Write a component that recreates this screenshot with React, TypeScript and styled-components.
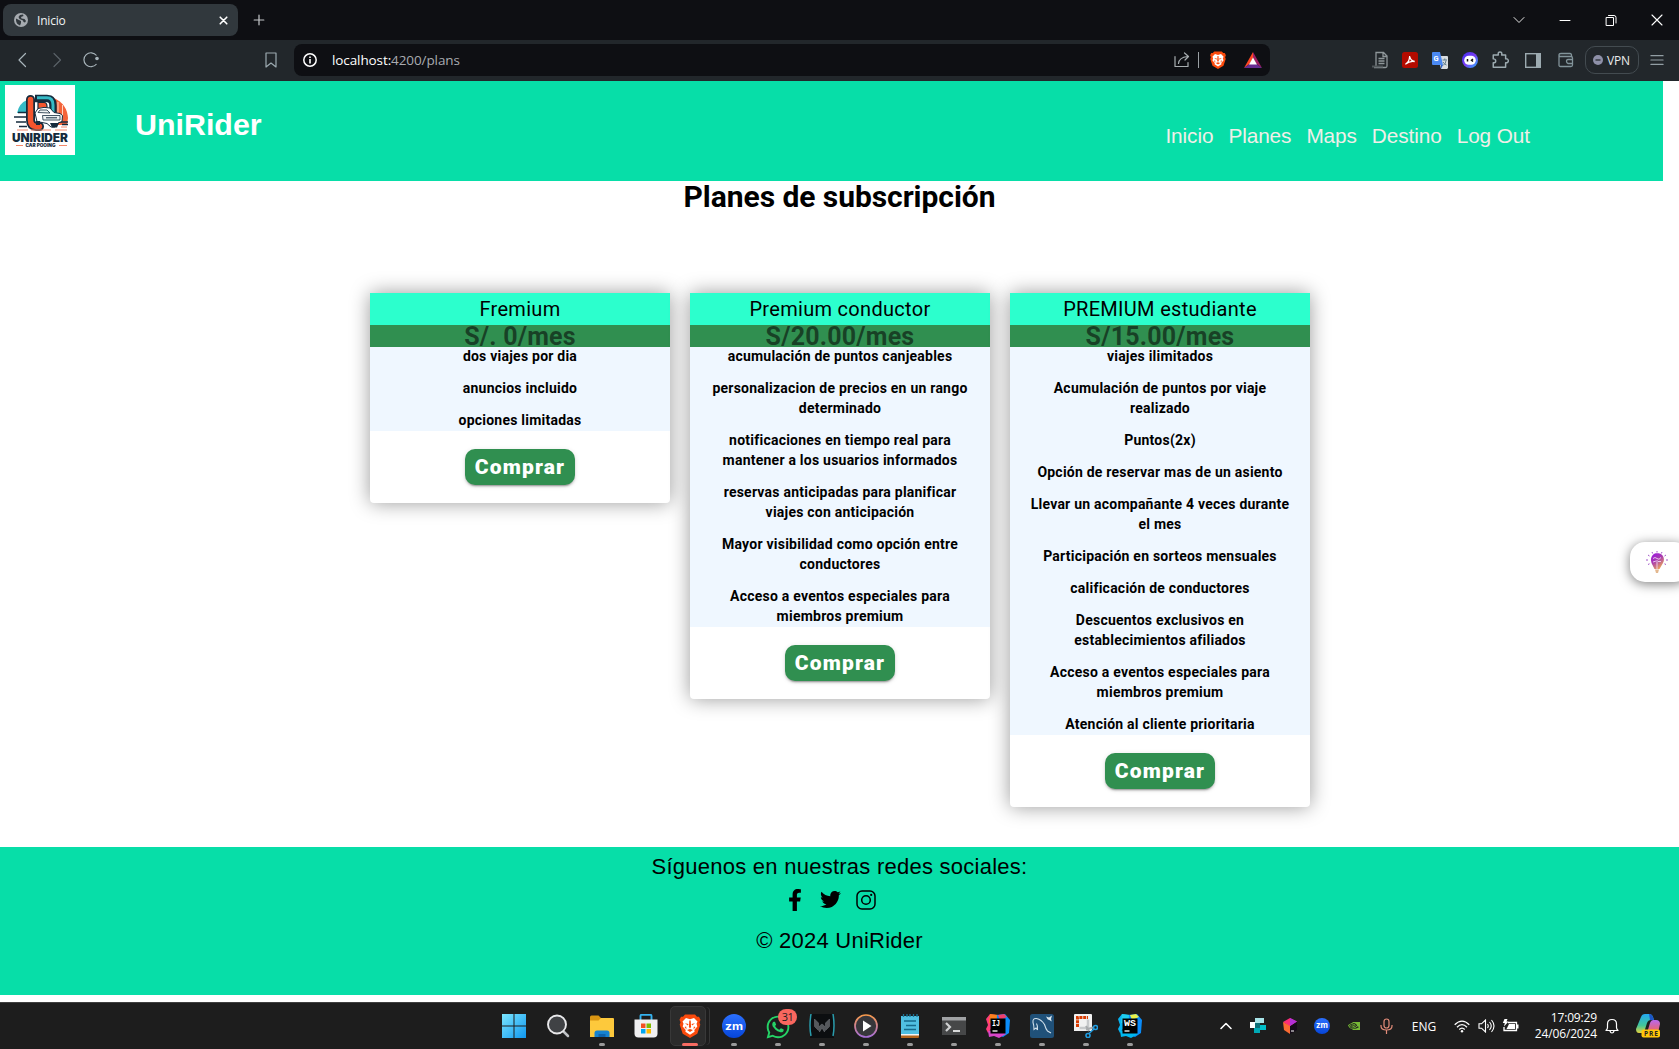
import React from "react";
import styled, { createGlobalStyle } from "styled-components";
import { FaFacebookF, FaTwitter, FaWhatsapp } from "react-icons/fa";
import { SiNvidia } from "react-icons/si";

const GlobalStyle = createGlobalStyle`
  * { box-sizing: border-box; }
  html, body { margin: 0; padding: 0; background: #fff; overflow: hidden; }
  p, h1, h2, ul { margin: 0; padding: 0; }
  svg { display: block; flex: none; }
`;

const ui = `"Open Sans", "Noto Sans", sans-serif`;
const arial = `"Liberation Sans", Arial, sans-serif`;

const Screen = styled.div`
  width: 1679px;
  height: 1049px;
  display: flex;
  flex-direction: column;
  overflow: hidden;
`;

/* Browser chrome */
const TabStrip = styled.div`
  height: 40px;
  background: #0e0f13;
  display: flex;
  align-items: center;
  padding-left: 3px;
`;
const Tab = styled.div`
  width: 235px;
  height: 32px;
  border-radius: 8px;
  background: #31383d;
  display: flex;
  align-items: center;
  padding: 0 7px 0 11px;
  color: #f2f3f4;
  font: 12px ${ui};
  letter-spacing: -0.2px;
`;
const TabTitle = styled.span`
  flex: 1;
  padding-left: 9px;
`;
const Slot = styled.div<{ w: number }>`
  width: ${(p) => p.w}px;
  height: 100%;
  display: flex;
  align-items: center;
  justify-content: center;
  flex: none;
`;
const Spacer = styled.div`
  flex: 1;
`;
const Toolbar = styled.div`
  height: 41px;
  background: #22272b;
  display: flex;
  align-items: center;
  padding: 0 4px 1px 7px;
`;
const NavButtons = styled.div`
  width: 247px;
  height: 100%;
  display: flex;
`;
const AddressBar = styled.div`
  width: 976px;
  height: 32px;
  margin-left: 6px;
  border-radius: 8px;
  background: #0e0f13;
  display: flex;
  align-items: center;
  padding: 0 1px 0 0;
`;
const Url = styled.span`
  flex: 1;
  padding-left: 6px;
  font: 13.5px ${ui};
  letter-spacing: -0.1px;
  color: #a9abb0;
  b {
    font-weight: 400;
    color: #fff;
  }
`;
const Divider = styled.i`
  width: 1px;
  height: 16px;
  background: #9aa0a4;
`;
const Vpn = styled.div`
  width: 54px;
  height: 28px;
  margin-left: 2px;
  border: 1px solid #434b50;
  border-radius: 10px;
  display: flex;
  align-items: center;
  gap: 4px;
  padding-left: 7px;
  color: #e9ebec;
  font: 12px ${ui};
  letter-spacing: -0.2px;
`;

/* Web page */
const Page = styled.div`
  height: 921px;
  background: #fff;
  display: flex;
  flex-direction: column;
  position: relative;
`;
const Header = styled.header`
  width: 1663px;
  height: 100px;
  background: #07dea8;
  display: flex;
  padding: 4px 133px 0 5px;
  font-family: ${arial};
`;
const Brand = styled.h1`
  margin: 21px 0 0 60px;
  font-size: 30.4px;
  line-height: 36px;
  font-weight: 700;
  color: #fff;
`;
const Nav = styled.nav`
  margin-left: auto;
  margin-top: 39px;
  display: flex;
  gap: 15px;
  font-size: 20.8px;
  line-height: 24px;
  letter-spacing: -0.1px;
  color: #f0efe8;
`;
const Title = styled.h2`
  height: 112px;
  text-align: center;
  font: 700 30px/32px Roboto, sans-serif;
  letter-spacing: -0.05px;
  color: #000;
`;
const Plans = styled.main`
  display: flex;
  justify-content: center;
  align-items: flex-start;
  gap: 20px;
  width: 1680px;
  height: 554px;
`;
const Card = styled.article`
  width: 300px;
  border-radius: 4px;
  background: #fff;
  box-shadow: 0 0 20px rgba(0, 0, 0, 0.4);
  font-family: Roboto, sans-serif;
  text-align: center;
  color: #000;
`;
const CardTitle = styled.h2`
  height: 32px;
  background: #2cffcd;
  font-size: 20px;
  line-height: 32px;
  font-weight: 400;
  letter-spacing: 0.3px;
`;
const Price = styled.p`
  height: 22px;
  background: #308f50;
  color: rgba(16, 40, 24, 0.75);
  font-size: 25px;
  line-height: 24px;
  font-weight: 700;
  letter-spacing: 0.2px;
`;
const Features = styled.ul`
  position: relative;
  padding: 0 16px 1px;
  background: #eff7ff;
  list-style: none;
  display: flex;
  flex-direction: column;
  gap: 12px;
  font-size: 14px;
  line-height: 20px;
  font-weight: 700;
  letter-spacing: 0.23px;

  li:first-child {
    margin-top: -1px;
  }
`;
const CardActions = styled.div`
  height: 72px;
  display: flex;
  align-items: center;
  justify-content: center;
`;
const BuyButton = styled.button`
  width: 110px;
  height: 36px;
  padding: 0;
  border: 0;
  border-radius: 10px;
  background: #308f50;
  box-shadow: 0 3px 1px -2px rgba(0, 0, 0, 0.2), 0 2px 2px rgba(0, 0, 0, 0.14), 0 1px 5px rgba(0, 0, 0, 0.12);
  color: #fff;
  font: 900 21px/36px Roboto, sans-serif;
  letter-spacing: 1.15px;
`;
const Footer = styled.footer`
  height: 148px;
  background: #07dea8;
  color: #000;
  display: flex;
  flex-direction: column;
  align-items: center;
  font: 22px/32px ${arial};
  letter-spacing: 0.25px;
  padding-top: 4px;
`;
const Social = styled.div`
  height: 42px;
  display: flex;
  gap: 14px;
  padding: 6px 18px 0 0;
`;
const Tip = styled.aside`
  position: absolute;
  right: -10px;
  top: 461px;
  width: 59px;
  height: 40px;
  border-radius: 15px;
  background: #fff;
  box-shadow: 0 2px 12px rgba(0, 0, 0, 0.5);
  padding: 9px 0 0 16px;
`;

/* Desktop taskbar */
const Taskbar = styled.div`
  height: 47px;
  background: #1d1d1d;
  border-top: 1px solid #3f3f3f;
  display: flex;
  padding-left: 492px;
  color: #fff;
  font: 12px ${ui};
`;
const Apps = styled.div`
  width: 718px;
  display: flex;
`;
const AppSlot = styled.div<{ mark?: "active" | "open" }>`
  width: 44px;
  height: 46px;
  display: flex;
  justify-content: center;
  padding-top: 11px;
  position: relative;
  &::after {
    content: "";
    position: absolute;
    bottom: 3px;
    left: ${(p) => (p.mark === "active" ? 14 : 19)}px;
    width: ${(p) => (p.mark === "active" ? 16 : 6)}px;
    height: 3px;
    border-radius: 2px;
    background: ${(p) => (p.mark === "active" ? "#f86c62" : p.mark ? "#9a9a9a" : "transparent")};
  }
`;
const ActiveTile = styled.div`
  position: absolute;
  left: 2px;
  top: 3px;
  width: 36px;
  height: 40px;
  border-radius: 5px;
  background: #2b2b2b;
  border: 1px solid #383838;
  box-shadow: 4px 0 0 -1px #1d1d1d, 5px 0 0 -1px #363636;
`;
const Over = styled.div`
  position: relative;
  height: 24px;
`;
const Badge = styled.span`
  position: absolute;
  left: 22px;
  top: 6px;
  width: 19px;
  height: 16px;
  border-radius: 8px;
  background: #f9675f;
  color: #1d1d1d;
  font: 11px/16px ${ui};
  text-align: center;
  letter-spacing: -0.5px;
`;
const Tray = styled.div`
  flex: 1;
  height: 46px;
  display: flex;
`;
const Clock = styled.div`
  width: 75px;
  padding-top: 7px;
  text-align: right;
  line-height: 16px;
  letter-spacing: -0.15px;
`;

const Line = ({ d, s = 16, c = "#9caab0", w = 1.2 }: { d: string; s?: number; c?: string; w?: number }) => (
  <svg width={s} height={s} viewBox="0 0 16 16" fill="none" stroke={c} strokeWidth={w} strokeLinejoin="round" strokeLinecap="round">
    <path d={d} />
  </svg>
);

const Lion = ({ s }: { s: number }) => (
  <svg width={s} height={s} viewBox="0 0 24 24">
    <path d="M7 .5h10l2 2.300h2l1.500 3-1 2.500.8 2.500-3 9L12 24l-7.300-4.200-3-9 .8-2.500-1-2.500 1.500-3h2z" fill="#fb4a0c" />
    <path d="M12 5.300 8 4 4.500 7.500l1 2.300-.8 2.700 3 3.500-.3 1.800L12 20.800l4.600-3-.3-1.800 3-3.500-.8-2.700 1-2.300L16 4z" fill="#fff" />
    <path d="m7 9.200 3.500.9-.6 1.500zM17 9.200l-3.500.9.6 1.500zM11.300 6.500h1.400l.4 6.500-1.100 1.500-1.100-1.500zM9 16l3-1 3 1-3 2zM6.500 13l2 2.500-.3-3zM17.500 13l-2 2.500.3-3z" fill="#fb4a0c" />
  </svg>
);

const Logo = () => (
  <svg width="70" height="70" viewBox="0 0 70 70">
    <rect width="70" height="70" fill="#fff" />
    <path d="M12 28Q14 18 23 14.500V28z" fill="#35bac6" />
    <path d="M49 13q13 6 14 20l-1 7H48z" fill="#f4633a" />
    <path d="M53 17v13M57.500 20v12" stroke="#ffd2c0" strokeWidth="1" />
    <path d="M30 13.500h12q6 0 6 7v8" fill="none" stroke="#152b3d" strokeWidth="7.500" />
    <path d="M32 12.800h10q6 0 6 7.200v8" fill="none" stroke="#35bac6" strokeWidth="3" />
    <path d="M33 17.500h6q3 0 3 4v5h-9z" fill="#f4552e" stroke="#152b3d" strokeWidth="1.200" />
    <path d="M25.500 14.500V35q0 6 6 6.500h3" fill="none" stroke="#152b3d" strokeWidth="9" strokeLinecap="round" />
    <path d="M25.500 14.500V35q0 6 6 6.500h3" fill="none" stroke="#f4552e" strokeWidth="5.500" strokeLinecap="round" />
    <path d="M9 32h12M13 27.500h8M11 37h10M14 41.500h8M57 39.500h6M54 37h9" stroke="#152b3d" strokeWidth="1.500" />
    <path d="m30 28 3-4.500q6-2 12-.5l4 4.500 6 1 2.500 2-.5 6-4 1.500-3 4h-4l-4-3.500-10-2z" fill="#fff" stroke="#152b3d" strokeWidth="1" />
    <path d="m33 27.500 2-2.500h7l3 3zM37.500 30.500H55V35H38z" fill="#edf2f3" stroke="#152b3d" strokeWidth=".8" />
    <path d="M41 32.800h11" stroke="#152b3d" strokeWidth="1" />
    <path d="M45 38h9l-2 4.500h-5zM31 36h4v4h-4z" fill="#152b3d" />
    <path d="M12 45h11M26 45h20M50 45h12M56 42h6" stroke="#f4886a" strokeWidth="1" />
    <text x="7" y="57.300" textLength="56" lengthAdjust="spacingAndGlyphs" fontFamily="Inter, sans-serif" fontWeight="900" fontSize="11.500" fill="#152b3d">UNIRIDER</text>
    <text x="20.500" y="62" textLength="30" lengthAdjust="spacingAndGlyphs" fontFamily="Inter, sans-serif" fontWeight="900" fontSize="4.200" fill="#152b3d">CAR POOING</text>
    <path d="M11 60.500h7M54 60.500h8" stroke="#f4886a" strokeWidth="1" />
  </svg>
);

const JetBrains = ({ label, hues }: { label: string; hues: string[] }) => (
  <svg width="24" height="24" viewBox="0 0 24 24">
    <path d="m0 5 4-5 6 1-2 10-6 8-2-4 2-4z" fill={hues[0]} />
    <path d="m4 0 9 1-1 8H3z" fill={hues[1]} />
    <path d="m11 1 8-1 5 6-1 13-6 4-7-3z" fill={hues[2]} />
    <path d="m2 17 5-1 9 1 4 3-7 4-5-2-5 1z" fill={hues[3]} />
    <path d="m12 1 6-1 3 3-7 3z" fill={hues[4]} />
    <rect x="4.500" y="4.500" width="15" height="15" fill="#000" />
    <text x="6" y="12" fontFamily="Liberation Mono, monospace" fontWeight="700" fontSize="9" textLength={label === "IJ" ? 8 : 12} lengthAdjust="spacingAndGlyphs" fill="#fff">{label}</text>
    <path d="M6.500 17h5" stroke="#fff" strokeWidth="1.300" />
  </svg>
);

const Zoom = ({ s }: { s: number }) => (
  <svg width={s} height={s} viewBox="0 0 24 24">
    <defs><linearGradient id="zm" x2="0" y2="1"><stop stopColor="#2b70ff" /><stop offset="1" stopColor="#0645d8" /></linearGradient></defs>
    <circle cx="12" cy="12" r="12" fill="url(#zm)" />
    <text x="3" y="15.500" fontFamily="Inter, sans-serif" fontWeight="700" fontSize="11" textLength="18" lengthAdjust="spacingAndGlyphs" fill="#fff">zm</text>
  </svg>
);

const plans = [
  { name: "Fremium", price: "S/. 0/mes", items: ["dos viajes por dia", "anuncios incluido", "opciones limitadas"] },
  {
    name: "Premium conductor",
    price: "S/20.00/mes",
    items: [
      "acumulación de puntos canjeables",
      "personalizacion de precios en un rango determinado",
      "notificaciones en tiempo real para mantener a los usuarios informados",
      "reservas anticipadas para planificar viajes con anticipación",
      "Mayor visibilidad como opción entre conductores",
      "Acceso a eventos especiales para miembros premium",
    ],
  },
  {
    name: "PREMIUM estudiante",
    price: "S/15.00/mes",
    items: [
      "viajes ilimitados",
      "Acumulación de puntos por viaje realizado",
      "Puntos(2x)",
      "Opción de reservar mas de un asiento",
      "Llevar un acompañante 4 veces durante el mes",
      "Participación en sorteos mensuales",
      "calificación de conductores",
      "Descuentos exclusivos en establecimientos afiliados",
      "Acceso a eventos especiales para miembros premium",
      "Atención al cliente prioritaria",
    ],
  },
];

const Chrome = () => (
  <>
    <TabStrip>
      <Tab>
        <svg width="14" height="14" viewBox="0 0 14 14">
          <circle cx="7" cy="7" r="7" fill="#a6abb0" />
          <path d="M2 5.500 5 7l2 1v2l-1 2.500Q2 11 2 7zM6 2l3-.5.500 1.500L7 4l.5 1.500 3 .5 1.500 2-1 1.500-1.500-.5L9 7.500 5.500 6 4.500 4z" fill="#31383d" />
        </svg>
        <TabTitle>Inicio</TabTitle>
        <Line d="M4.500 4.500l7 7M11.500 4.500l-7 7" c="#fff" w={1.700} s={15} />
      </Tab>
      <Slot w={42}><Line d="M8 2.500v11M2.500 8h11" c="#c4c7c9" w={1.400} s={14} /></Slot>
      <Spacer />
      <Slot w={46}><Line d="M3 5.500l5 5 5-5" c="#e4e4e4" w={1} /></Slot>
      <Slot w={46}><Line d="M3 8.500h10" c="#fff" w={1} /></Slot>
      <Slot w={46}><Line d="M3.500 5.500h7v8h-7zM5.500 3.500H11q2 0 2 2V11" c="#fff" w={1} /></Slot>
      <Slot w={45}><Line d="M3 3l10 10M13 3L3 13" c="#fff" w={1.100} /></Slot>
    </TabStrip>
    <Toolbar>
      <NavButtons>
        <Slot w={32}><Line d="M10.500 1.500L4 8l6.500 6.500" c="#a9b5bb" /></Slot>
        <Slot w={36}><Line d="M5 1.500L11.500 8 5 14.500" c="#596167" /></Slot>
        <Slot w={32}>
          <svg width="16" height="16" viewBox="0 0 16 16" fill="none" stroke="#a9b5bb" strokeWidth="1.200">
            <path d="M13.500 3.500A7 7 0 1 0 13.500 12" />
            <circle cx="14" cy="6.500" r="1.800" fill="#a9b5bb" stroke="none" />
          </svg>
        </Slot>
      </NavButtons>
      <Slot w={34}><Line d="M3 1h10v14l-5-4-5 4z" c="#9caab0" /></Slot>
      <AddressBar>
        <Slot w={32}>
          <svg width="14" height="14" viewBox="0 0 14 14" fill="none" stroke="#fff">
            <circle cx="7" cy="7" r="6.200" strokeWidth="1.500" /><path d="M7 6v4.500M7 3.500V5" strokeWidth="1.600" />
          </svg>
        </Slot>
        <Url><b>localhost:</b>4200/plans</Url>
        <Slot w={32}><Line d="M1 4.500V14.500H14V10.500M4.500 11.500Q5 5.500 13.500 4.500M10.500 1L14.500 4.500 11 8" c="#a7adb0" /></Slot>
        <Divider />
        <Slot w={38}><Lion s={18} /></Slot>
        <Slot w={32}>
          <svg width="18" height="16" viewBox="0 0 18 16">
            <path d="M9 0v6L5.500 12 0 16z" fill="#ff4724" /><path d="M9 0l9 16-5.500-4L9 6z" fill="#9e1f63" /><path d="M0 16l5.500-4h7l5.500 4z" fill="#662d91" /><path d="M9 5.500l4 7H5z" fill="#fff" />
          </svg>
        </Slot>
      </AddressBar>
      <Spacer />
      <Slot w={30}>
        <svg width="18" height="18" viewBox="0 0 18 18" fill="none" stroke="#8e9699" strokeWidth="1.300">
          <path d="M5 13V1.500h7.500L16 5v10q0 1.500-1.500 1.500H3q2 0 2-2zM12 2v3.500h4M7.500 7.500h6M7.500 10h6M7.500 12.500h6" /><path d="M1 15.500h11" stroke="#50575a" strokeWidth="2" />
        </svg>
      </Slot>
      <Slot w={29}>
        <svg width="16" height="16" viewBox="0 0 16 16"><rect width="16" height="16" rx="2.500" fill="#b30b00" /><path d="M3.500 12c2-1 4-4 4.200-8 .3 3 2 5 5 5.500-3-.5-6 0-9 2.500z" fill="none" stroke="#fff" strokeWidth="1.300" /></svg>
      </Slot>
      <Slot w={31}>
        <svg width="16" height="17" viewBox="0 0 16 17"><path d="M6 4h9q1 0 1 1v11l-1 1H9z" fill="#d9dde0" /><path d="M0 1q0-1 1-1h7l3 13H1q-1 0-1-1z" fill="#4a89f3" /><path d="M9 17V13h2z" fill="#2c5fc9" /><text x="1.500" y="9" fontFamily="Roboto" fontWeight="700" fontSize="7.500" fill="#fff">G</text><path d="M10.500 8h4.500M12.800 6.500V8M11 13.500q3-2 3-5M11 10q1 2 3.500 3" fill="none" stroke="#607d8b" /></svg>
      </Slot>
      <Slot w={29}>
        <svg width="16" height="16" viewBox="0 0 16 16"><defs><linearGradient id="eye" x2="1" y2="1"><stop stopColor="#3e2df0" /><stop offset=".5" stopColor="#7a3cf5" /><stop offset="1" stopColor="#28b8ff" /></linearGradient></defs><circle cx="8" cy="8" r="8" fill="url(#eye)" /><rect x="2.200" y="3.800" width="11.600" height="9" rx="4.500" fill="#fff" /><path d="M5.500 7v2.500M11 7l-1.500 1.200L11 9.500" stroke="#111" strokeWidth="1.500" fill="none" /></svg>
      </Slot>
      <Slot w={32}><Line s={18} d="M2 3.500h4.500Q6 .8 8 .8t1.500 2.700H13V7q2.400-.2 2.400 1.700T13 10.500v4H2v-4q2.200 0 2.200-1.700T2 7z" w={1.300} /></Slot>
      <Slot w={33}>
        <svg width="16" height="15" viewBox="0 0 16 15"><rect x=".7" y=".7" width="14.600" height="13.600" fill="none" stroke="#9caab0" strokeWidth="1.400" /><path d="M11 0h5v15h-5z" fill="#9caab0" /></svg>
      </Slot>
      <Slot w={34}><Line d="M13.500 4.500V3q0-1.500-1.500-1.500H3Q1 1.500 1 3t2 1.500h10q1.500 0 1.500 1.500v7q0 1.500-1.500 1.500H2.500Q1 14.500 1 13V3M14.500 7.500H10q-1.500 0-1.500 1.800T10 11.500h4.500" w={1.300} c="#82949a" /></Slot>
      <Vpn>
        <svg width="10" height="10" viewBox="0 0 10 10"><circle cx="5" cy="5" r="5" fill="#8e90a8" /><path d="M2.500 5h5" stroke="#22272b" strokeWidth="1.200" /></svg>
        VPN
      </Vpn>
      <Slot w={36}><Line s={14} d="M1 3h14M1 8h14M1 13h14" c="#929ea4" /></Slot>
    </Toolbar>
  </>
);

const Desktop = () => (
  <Taskbar>
    <Apps>
      <AppSlot>
        <svg width="24" height="24" viewBox="0 0 24 24"><defs><linearGradient id="win" x2="1" y2="1"><stop stopColor="#7be6ff" /><stop offset="1" stopColor="#0f97f0" /></linearGradient></defs><path d="M0 0h11.500v11.500H0zM12.500 0H24v11.500H12.500zM0 12.500h11.500V24H0zM12.500 12.500H24V24H12.500z" fill="url(#win)" /></svg>
      </AppSlot>
      <AppSlot>
        <svg width="24" height="24" viewBox="0 0 24 24" fill="none"><path d="M17.500 17.500l4.500 4.500" stroke="#bfc2c5" strokeWidth="2.500" strokeLinecap="round" /><circle cx="11" cy="10.500" r="9" fill="#404245" stroke="#e8e8ea" strokeWidth="1.900" /></svg>
      </AppSlot>
      <AppSlot mark="open">
        <svg width="24" height="24" viewBox="0 0 24 24"><path d="M0 3q0-1.500 1.500-1.500h7L11 4v6H0z" fill="#d99512" /><path d="M0 6.500h8.500L11 4h12q1 0 1 1v18H0z" fill="#fdc93c" /><path d="M4.500 23v-4q0-2.500 2.500-2.500h10q2.500 0 2.500 2.500v4z" fill="#1682cf" /><path d="M8.500 20h7v3h-7z" fill="#0e63ac" /></svg>
      </AppSlot>
      <AppSlot>
        <svg width="24" height="24" viewBox="0 0 24 24"><path d="M6.500 6V2q0-1.200 1-1.200h9q1 0 1 1.200v4" fill="none" stroke="#35b3f0" strokeWidth="1.900" /><path d="M.5 5.500h23v14q0 4-4 4h-15q-4 0-4-4z" fill="#f0f0f1" /><path d="M7 9.500h4.500V14H7z" fill="#f25022" /><path d="M12.500 9.500H17V14h-4.500z" fill="#7fba00" /><path d="M7 15h4.500v4.500H7z" fill="#00a4ef" /><path d="M12.500 15H17v4.500h-4.500z" fill="#ffb900" /></svg>
      </AppSlot>
      <AppSlot mark="active"><ActiveTile /><Over><Lion s={24} /></Over></AppSlot>
      <AppSlot mark="open"><Zoom s={24} /></AppSlot>
      <AppSlot mark="open"><Over><FaWhatsapp size={26} color="#25d366" /></Over><Badge>31</Badge></AppSlot>
      <AppSlot mark="open">
        <svg width="28" height="24" viewBox="0 0 28 24"><rect x="2" width="24" height="24" fill="#0c0e10" /><path d="M3 0Q1 12 3 22M25 0q2 12 0 22" stroke="#2a9cac" strokeWidth="1.500" fill="none" /><path d="M6.500 5v7.500l4 4V9zM21.500 5v7.500l-4 4V9zM11.500 12l2.500-2 2.500 2v6L14 14l-2.500 4z" fill="#55585c" stroke="#777a7e" strokeWidth=".5" /></svg>
      </AppSlot>
      <AppSlot mark="open">
        <svg width="24" height="24" viewBox="0 0 24 24"><defs><linearGradient id="mp" x2="0" y2="1"><stop stopColor="#f79a4b" /><stop offset="1" stopColor="#a66ed8" /></linearGradient></defs><circle cx="12" cy="12" r="11" fill="#37373b" stroke="url(#mp)" strokeWidth="1.700" /><path d="M9 6.500v11l8.500-5.500z" fill="#fff" /></svg>
      </AppSlot>
      <AppSlot mark="open">
        <svg width="20" height="24" viewBox="0 0 20 24"><path d="M1 2h18v19H1z" fill="#50bfe2" /><path d="M1 20h18v2.500q0 1.500-1 1.500H1z" fill="#b3651d" /><path d="M1 20h18v1.500H1z" fill="#f4f4f4" /><path d="M3.500 0v3M7 0v3M10 0v3M13.500 0v3M17 0v3" stroke="#1c7396" strokeWidth="1.300" /><path d="M4 7h12M6 11.500h10M4 15.500h12" stroke="#166a8c" strokeWidth="1.500" /></svg>
      </AppSlot>
      <AppSlot mark="open">
        <svg width="24" height="24" viewBox="0 0 24 24"><path d="M0 3h24v18H0z" fill="#464748" /><path d="M0 3h24v3.500H0z" fill="#a0a2a4" /><path d="M4 9l4 4-4 4" stroke="#d0d1d2" strokeWidth="2.200" fill="none" /><path d="M11 17h7" stroke="#fff" strokeWidth="1.600" /></svg>
      </AppSlot>
      <AppSlot mark="open"><JetBrains label="IJ" hues={["#fe3d7a", "#fc801d", "#0a8cf8", "#d945c8", "#ef3f6c"]} /></AppSlot>
      <AppSlot mark="open">
        <svg width="24" height="24" viewBox="0 0 24 24"><rect width="24" height="24" rx="2.500" fill="#205179" /><path d="M7.500 16l-1.500-2-2 1.500Q4 11 3 8.500 2.500 4 6.500 4.500q5 1 8 6 1.500 5 3 6.500l3.500 2M7.500 16q.5-4-1-6.500" fill="none" stroke="#cfdfea" strokeWidth="1.100" /><path d="M16 2.500l3 1 3-2-1 3.500.8 2.500-2.500-1.500-1.500-.5z" fill="#dce8f0" /></svg>
      </AppSlot>
      <AppSlot mark="open">
        <svg width="24" height="24" viewBox="0 0 24 24"><path d="M0 1q0-1 1-1h16q1 0 1 1v16H0z" fill="#f1f1f1" /><path d="M3.500 13V3.500H14" fill="none" stroke="#d83b01" strokeWidth="3" strokeDasharray="3 .8" /><path d="M14 5.500v8.500H5.500" stroke="#c7c9cb" strokeWidth="2.500" fill="none" /><path d="M12 12l3 5M12 15.500l7-2" stroke="#a8abad" strokeWidth="2" /><circle cx="14" cy="21.500" r="2" fill="none" stroke="#209ce0" strokeWidth="1.600" /><circle cx="21.500" cy="13.500" r="2" fill="none" stroke="#209ce0" strokeWidth="1.600" /><path d="M15 19.500l5-4.500" stroke="#209ce0" strokeWidth="1.500" /></svg>
      </AppSlot>
      <AppSlot mark="open"><JetBrains label="WS" hues={["#07b3f2", "#20cdee", "#0a8cfa", "#00b7ef", "#e8f04a"]} /></AppSlot>
    </Apps>
    <Tray>
      <Slot w={32}><Line d="M3 10.500l5-5 5 5" c="#fff" w={1.600} /></Slot>
      <Slot w={32}><svg width="16" height="16" viewBox="0 0 16 16"><path d="M5 0h9v5H5z" fill="#a8e4e8" /><path d="M0 4h5v6H0z" fill="#fff" /><path d="M5 5h5v5H5z" fill="#0d6f78" /><path d="M4 10h6v5H4z" fill="#00a9b5" /><path d="M10 7h6v5h-6z" fill="#00bfc9" /></svg></Slot>
      <Slot w={32}><svg width="15" height="16" viewBox="0 0 15 16"><path d="M7 0l7 3.500L7 9 0 4z" fill="#fb2d78" /><path d="M0 4l7 4v8l-6-4z" fill="#fa6a32" /><path d="M14 3.500V12l-7 4V8z" fill="#150c19" /><path d="M7 0l7 3.500L7 8z" fill="#b32fd8" /><path d="M8 13h3" stroke="#fff" /></svg></Slot>
      <Slot w={32}><Zoom s={16} /></Slot>
      <Slot w={32}><SiNvidia size={12} color="#76b935" /></Slot>
      <Slot w={32}><svg width="13" height="16" viewBox="0 0 13 16" fill="none" stroke="#e38c79" strokeWidth="1.200"><rect x="4" y="1" width="5" height="9" rx="2.500" /><path d="M1 7v1q0 4 5.500 4T12 8V7M6.500 12v4" /></svg></Slot>
      <Slot w={44}>ENG</Slot>
      <Slot w={4} />
      <Slot w={24}><svg width="16" height="13" viewBox="0 0 16 13" fill="none" stroke="#fff" strokeWidth="1.300"><path d="M.7 4.800Q8-2.500 15.300 4.800M3 7.200q5-5 10 0M5.300 9.500q2.700-2.700 5.400 0" /><circle cx="8" cy="11.300" r="1.200" fill="#fff" stroke="none" /></svg></Slot>
      <Slot w={24}><svg width="17" height="14" viewBox="0 0 17 14" fill="none" stroke="#fff" strokeWidth="1.100"><path d="M1 4.800h2.500L7.500 1v12L3.500 9.200H1zM9.500 5q1.500 2 0 4M11.500 3q3.500 4 0 8M13.500 1q5 6 0 12" /></svg></Slot>
      <Slot w={24}><svg width="17" height="14" viewBox="0 0 17 14"><path d="M6 3.500h8.500v8H2V8" fill="none" stroke="#fff" strokeWidth="1.300" /><path d="M7 5h6v5H4.500zM15 5.500h1.500v4H15zM2.500 0h3l-1 2.500H6.500L2 7.500l.8-3.500H.8z" fill="#fff" /></svg></Slot>
      <Clock>17:09:29<br />24/06/2024</Clock>
      <Slot w={30}><Line d="M2 12.500h12q-1.500-1.500-1.500-3V6Q12.500 1.500 8 1.500T3.500 6v3.500q0 1.500-1.500 3zM6 13q.5 2 2 2t2-2" c="#fff" /></Slot>
      <Slot w={42}>
        <svg width="24" height="24" viewBox="0 0 24 24"><defs><linearGradient id="cp" x2="0" y2="1"><stop stopColor="#23a9f2" /><stop offset=".6" stopColor="#42c59a" /><stop offset="1" stopColor="#e5d33b" /></linearGradient><linearGradient id="cq" x2="0" y2="1"><stop stopColor="#b968ef" /><stop offset="1" stopColor="#f5644c" /></linearGradient></defs><path d="M5 3q1-3 4-3h4q3 0 4 3l1 3h-3q-3 0-4 3l-2.500 8q-.7 2-3 2H3q-3 0-3-4z" fill="url(#cp)" /><path d="M13 0q3 0 4 3l1 3h-4z" fill="#1c55c5" /><path d="M14 9q1-3 3.500-3H20q4 0 4 4l-2 9H11z" fill="url(#cq)" /><rect x="5.500" y="15.500" width="18.500" height="8" rx="2" fill="#ffc60a" /><text x="8" y="22" fontFamily="Open Sans" fontWeight="700" fontSize="6.500" textLength="14" fill="#222">PRE</text></svg>
      </Slot>
    </Tray>
  </Taskbar>
);

export default function App() {
  return (
    <Screen>
      <GlobalStyle />
      <Chrome />
      <Page>
        <Header>
          <Logo />
          <Brand>UniRider</Brand>
          <Nav>
            <span>Inicio</span>
            <span>Planes</span>
            <span>Maps</span>
            <span>Destino</span>
            <span>Log Out</span>
          </Nav>
        </Header>
        <Title>Planes de subscripción</Title>
        <Plans>
          {plans.map((plan) => (
            <Card key={plan.name}>
              <CardTitle>{plan.name}</CardTitle>
              <Price>{plan.price}</Price>
              <Features>
                {plan.items.map((item) => (
                  <li key={item}>{item}</li>
                ))}
              </Features>
              <CardActions>
                <BuyButton>Comprar</BuyButton>
              </CardActions>
            </Card>
          ))}
        </Plans>
        <Footer>
          <p>Síguenos en nuestras redes sociales:</p>
          <Social>
            <FaFacebookF size={22} />
            <FaTwitter size={21} />
            <svg width="22" height="22" viewBox="0 0 22 22" fill="none" stroke="#000" strokeWidth="1.500">
              <rect x="2" y="2" width="18" height="18" rx="5" />
              <circle cx="11" cy="11" r="4.300" />
              <circle cx="16.200" cy="5.900" r="1.100" fill="#000" stroke="none" />
            </svg>
          </Social>
          <p>© 2024 UniRider</p>
        </Footer>
        <Tip>
          <svg width="22" height="24" viewBox="0 0 22 24" fill="none">
            <defs><linearGradient id="bulb" x1="0" x2=".6" y2="1"><stop stopColor="#9b12e8" /><stop offset=".5" stopColor="#a83bb0" /><stop offset="1" stopColor="#e8a35c" /></linearGradient></defs>
            <path d="M5 9.500a6.500 6.500 0 1 1 12 2.500L13.500 18h-5L5.500 12z" fill="url(#bulb)" />
            <path d="M9 18.500h4l-1 3.500h-2z" fill="#e3b88f" />
            <path d="M7 7.500q2-2 4 0t4-1M7 11l3-1M11 9v9M12 10.500h3" stroke="#f0d3f5" strokeWidth=".9" />
            <path d="M11 0v1.500M6 1l.7 1.500M16 1l-.7 1.500M2 4l1.500 1M20 4l-1.500 1M0 9h2M20 9h2M2 13.500l1.500-.7M20 13.500l-1.500-.7" stroke="#a052c8" />
          </svg>
        </Tip>
      </Page>
      <Desktop />
    </Screen>
  );
}
